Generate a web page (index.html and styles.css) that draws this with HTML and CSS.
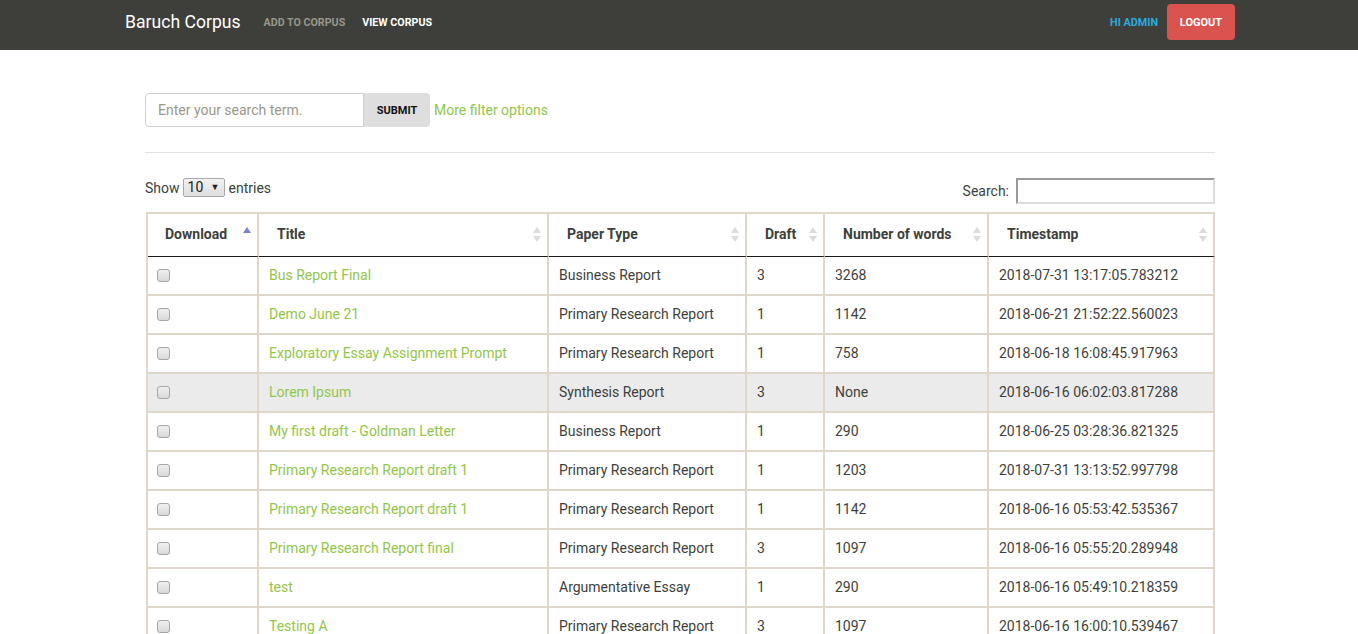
FILE: index.html
```html
<!DOCTYPE html>
<html lang="en">
<head>
<meta charset="utf-8">
<title>Baruch Corpus</title>
<link rel="stylesheet" href="styles.css">
</head>
<body>
<nav class="navbar">
  <div class="nav-inner">
    <a class="brand" href="#">Baruch Corpus</a>
    <a class="nav-link" href="#">Add to Corpus</a>
    <a class="nav-link active" href="#">View Corpus</a>
    <span class="spacer"></span>
    <span class="greeting">Hi admin</span>
    <a class="btn-logout" href="#">Logout</a>
  </div>
</nav>

<main class="container">
  <form class="search-form">
    <input class="search-input" type="text" placeholder="Enter your search term.">
    <button class="btn-submit" type="button">Submit</button>
    <a class="filter-link" href="#">More filter options</a>
  </form>
  <hr class="divider">

  <div class="dt-controls">
    <div class="dt-length">
      <span>Show</span>
      <span class="select-wrap"><select class="dt-select"><option>10</option></select></span>
      <span>entries</span>
    </div>
    <label class="dt-search">Search: <input class="dt-search-input" type="text"></label>
  </div>

  <table class="corpus-table">
    <thead>
      <tr>
        <th class="c-dl"><div class="th-in"><span>Download</span><svg class="sort" width="8" height="15" viewBox="0 0 8 15"><polygon points="0,6 4,0 8,6" fill="#7f80dc"/></svg></div></th>
        <th class="c-title"><div class="th-in"><span>Title</span><svg class="sort" width="8" height="15" viewBox="0 0 8 15"><polygon points="0,6 4,0 8,6" fill="#dcdcdc"/><polygon points="0,9 4,15 8,9" fill="#dcdcdc"/></svg></div></th>
        <th class="c-type"><div class="th-in"><span>Paper Type</span><svg class="sort" width="8" height="15" viewBox="0 0 8 15"><polygon points="0,6 4,0 8,6" fill="#dcdcdc"/><polygon points="0,9 4,15 8,9" fill="#dcdcdc"/></svg></div></th>
        <th class="c-draft"><div class="th-in"><span>Draft</span><svg class="sort" width="8" height="15" viewBox="0 0 8 15"><polygon points="0,6 4,0 8,6" fill="#dcdcdc"/><polygon points="0,9 4,15 8,9" fill="#dcdcdc"/></svg></div></th>
        <th class="c-words"><div class="th-in"><span>Number of words</span><svg class="sort" width="8" height="15" viewBox="0 0 8 15"><polygon points="0,6 4,0 8,6" fill="#dcdcdc"/><polygon points="0,9 4,15 8,9" fill="#dcdcdc"/></svg></div></th>
        <th class="c-time"><div class="th-in"><span>Timestamp</span><svg class="sort" width="8" height="15" viewBox="0 0 8 15"><polygon points="0,6 4,0 8,6" fill="#dcdcdc"/><polygon points="0,9 4,15 8,9" fill="#dcdcdc"/></svg></div></th>
      </tr>
    </thead>
    <tbody>
      <tr><td class="cb-cell"><input class="cb" type="checkbox"></td><td><a href="#">Bus Report Final</a></td><td>Business Report</td><td>3</td><td>3268</td><td>2018-07-31 13:17:05.783212</td></tr>
      <tr><td class="cb-cell"><input class="cb" type="checkbox"></td><td><a href="#">Demo June 21</a></td><td>Primary Research Report</td><td>1</td><td>1142</td><td>2018-06-21 21:52:22.560023</td></tr>
      <tr><td class="cb-cell"><input class="cb" type="checkbox"></td><td><a href="#">Exploratory Essay Assignment Prompt</a></td><td>Primary Research Report</td><td>1</td><td>758</td><td>2018-06-18 16:08:45.917963</td></tr>
      <tr class="hovered"><td class="cb-cell"><input class="cb" type="checkbox"></td><td><a href="#">Lorem Ipsum</a></td><td>Synthesis Report</td><td>3</td><td>None</td><td>2018-06-16 06:02:03.817288</td></tr>
      <tr><td class="cb-cell"><input class="cb" type="checkbox"></td><td><a href="#">My first draft - Goldman Letter</a></td><td>Business Report</td><td>1</td><td>290</td><td>2018-06-25 03:28:36.821325</td></tr>
      <tr><td class="cb-cell"><input class="cb" type="checkbox"></td><td><a href="#">Primary Research Report draft 1</a></td><td>Primary Research Report</td><td>1</td><td>1203</td><td>2018-07-31 13:13:52.997798</td></tr>
      <tr><td class="cb-cell"><input class="cb" type="checkbox"></td><td><a href="#">Primary Research Report draft 1</a></td><td>Primary Research Report</td><td>1</td><td>1142</td><td>2018-06-16 05:53:42.535367</td></tr>
      <tr><td class="cb-cell"><input class="cb" type="checkbox"></td><td><a href="#">Primary Research Report final</a></td><td>Primary Research Report</td><td>3</td><td>1097</td><td>2018-06-16 05:55:20.289948</td></tr>
      <tr><td class="cb-cell"><input class="cb" type="checkbox"></td><td><a href="#">test</a></td><td>Argumentative Essay</td><td>1</td><td>290</td><td>2018-06-16 05:49:10.218359</td></tr>
      <tr><td class="cb-cell"><input class="cb" type="checkbox"></td><td><a href="#">Testing A</a></td><td>Primary Research Report</td><td>3</td><td>1097</td><td>2018-06-16 16:00:10.539467</td></tr>
    </tbody>
  </table>
</main>
</body>
</html>
```

FILE: styles.css
```css
* { box-sizing: border-box; }

body {
  margin: 0;
  font-family: Roboto, "Liberation Sans", Arial, sans-serif;
  font-size: 14px;
  color: #3e3f3a;
  background: #fff;
}

a { text-decoration: none; }

/* Navbar */
.navbar {
  background: #3e3f3a;
  height: 50px;
}
.nav-inner {
  width: 1112px;
  padding-left: 2px;
  margin: 0 auto;
  height: 44px;
  display: flex;
  align-items: center;
}
.brand {
  color: #fff;
  font-size: 17.6px;
  line-height: 20px;
  margin-right: 23px;
}
.nav-link {
  color: #98978b;
  font-size: 10.7px;
  font-weight: 700;
  text-transform: uppercase;
  margin-right: 17px;
}
.nav-link.active { color: #fff; }
.spacer { flex: 1; }
.greeting {
  color: #29abe0;
  font-size: 10.8px;
  font-weight: 700;
  text-transform: uppercase;
  margin-right: 9px;
}
.btn-logout {
  display: flex;
  align-items: center;
  justify-content: center;
  width: 68px;
  height: 36px;
  background: #d9534f;
  color: #fff;
  border-radius: 4px;
  font-size: 11px;
  font-weight: 700;
  text-transform: uppercase;
}

/* Main */
.container {
  width: 1072px;
  padding-left: 2px;
  margin: 0 auto;
  padding-top: 43px;
}

.search-form {
  display: flex;
  align-items: center;
  height: 34px;
}
.search-input {
  width: 219px;
  height: 34px;
  border: 1px solid #cfcfcf;
  border-radius: 4px 0 0 4px;
  padding: 0 12px;
  font-family: inherit;
  font-size: 14px;
  color: #3e3f3a;
  outline: none;
}
.search-input::placeholder { color: #98978b; }
.btn-submit {
  width: 66px;
  height: 34px;
  border: 0;
  background: #dedede;
  border-radius: 0 4px 4px 0;
  font-family: inherit;
  font-size: 11px;
  font-weight: 700;
  color: #111;
  text-transform: uppercase;
  padding: 0;
}
.filter-link {
  margin-left: 4px;
  color: #93c54b;
  font-size: 14px;
}

.divider {
  border: 0;
  border-top: 1px solid #e3e3e3;
  margin: 25px 0 25px;
  height: 0;
}

/* DataTables controls */
.dt-controls {
  display: flex;
  justify-content: space-between;
  align-items: flex-start;
  height: 26px;
}
.dt-length {
  display: flex;
  align-items: center;
  height: 19px;
  font-size: 14px;
}
.select-wrap {
  position: relative;
  display: inline-block;
  margin: 0 4px 0 3px;
}
.select-wrap::after {
  content: "\25BC";
  position: absolute;
  right: 5px;
  top: 4px;
  font-size: 9px;
  color: #222;
  pointer-events: none;
}
.dt-select {
  -webkit-appearance: none;
  appearance: none;
  display: block;
  width: 42px;
  height: 19px;
  border: 1px solid #a9a9a9;
  border-radius: 2px;
  background: linear-gradient(#f2f2f2, #dedede);
  font-family: inherit;
  font-size: 14px;
  color: #222;
  padding: 0 0 0 4px;
  line-height: 17px;
}
.dt-search {
  display: flex;
  align-items: center;
  font-size: 14px;
}
.dt-search-input {
  margin-left: 7px;
  width: 199px;
  height: 26px;
  border: 2px solid;
  border-color: #9a9a9a #dcdcdc #dcdcdc #9a9a9a;
  padding: 2px 4px;
  font-family: inherit;
  outline: none;
}

/* Table */
.corpus-table {
  margin: 8px 0 0 1px;
  width: 1069px;
  table-layout: fixed;
  border-collapse: separate;
  border-spacing: 0;
  border-left: 2px solid #dfd7ca;
  border-top: 2px solid #dfd7ca;
}
.corpus-table th,
.corpus-table td {
  border-right: 2px solid #dfd7ca;
  text-align: left;
  line-height: 20px;
  white-space: nowrap;
}
.corpus-table th {
  font-weight: 700;
  padding: 10px 6px 12px 18px;
  border-bottom: 1px solid #1a1a1a;
}
.corpus-table th.c-dl { padding-left: 17px; }
.th-in {
  display: flex;
  justify-content: space-between;
  align-items: center;
}
.sort { display: block; }

.c-dl { width: 111px; }
.c-title { width: 290px; }
.c-type { width: 198px; }
.c-draft { width: 78px; }
.c-words { width: 164px; }
.c-time { width: 226px; }

.corpus-table td {
  padding: 8px 10px 9px;
  border-bottom: 2px solid #dfd7ca;
}
.corpus-table td a { color: #93c54b; }
.corpus-table td.cb-cell { padding-left: 9px; }
.corpus-table tr.hovered td { background: #ebebeb; }

.cb {
  -webkit-appearance: none;
  appearance: none;
  display: block;
  width: 13px;
  height: 13px;
  margin: 0;
  border: 1px solid #a6a6a6;
  border-radius: 3px;
  background: linear-gradient(#f0f0f0, #d9d9d9);
}
```
